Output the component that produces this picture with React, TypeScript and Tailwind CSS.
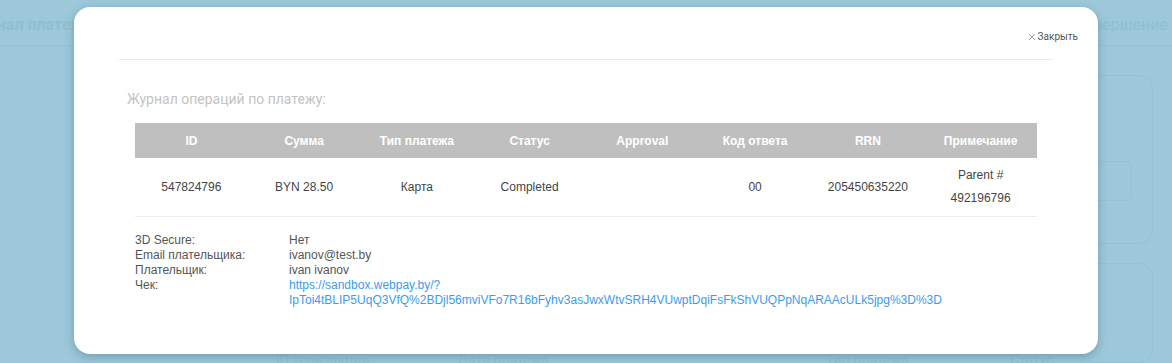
const columns = ["ID", "Сумма", "Тип платежа", "Статус", "Approval", "Код ответа", "RRN", "Примечание"];

const details = [
	{ label: "3D Secure:", value: "Нет" },
	{ label: "Email плательщика:", value: "ivanov@test.by" },
	{ label: "Плательщик:", value: "ivan ivanov" },
];

const receiptUrl =
	"https://sandbox.webpay.by/? IpToi4tBLIP5UqQ3VfQ%2BDjl56mviVFo7R16bFyhv3asJwxWtvSRH4VUwptDqiFsFkShVUQPpNqARAAcULk5jpg%3D%3D";

const Backdrop = () => {
	return (
		<div className="flex h-full flex-col text-[#91bfd2]" style={{ fontFamily: "Roboto, 'Liberation Sans', sans-serif" }}>
			<div className="flex h-[58px] items-center justify-between border-b border-[#94c2d4] pt-1">
				<span className="-ml-[36px] text-[16px] font-bold">Журнал платежей</span>
				<span className="mr-[4px] text-[16px]">завершение</span>
			</div>
			<div className="flex flex-1 justify-end pt-[29px] pr-[19px]">
				<div className="flex flex-col gap-[19px]">
					<div className="h-[169px] w-[74px] rounded-[14px] border border-[#94c2d4] pt-[85px]">
						<div className="h-[40px] w-[52px] rounded-[6px] border border-[#94c2d4]" />
					</div>
					<div className="h-[100px] w-[74px] rounded-[14px] border border-[#94c2d4]" />
				</div>
			</div>
		</div>
	);
};

const Modal = () => {
	return (
		<div className="absolute left-[74px] top-[7px] flex h-[347px] w-[1024px] flex-col rounded-[16px] bg-white shadow-[0_3px_10px_rgba(40,80,100,0.35)]">
			<div className="mx-[45px] flex h-[53px] items-start justify-end border-b border-[#ebebeb] pt-[24px]">
				<button
					className="-mr-[25px] flex items-center gap-[1px] text-[10px] leading-[12px] text-[#555]"
					style={{ fontFamily: "Roboto, 'Liberation Sans', sans-serif" }}
				>
					<svg width="8" height="8" viewBox="0 0 8 8" className="mr-[1px]">
						<path d="M1 1L7 7M7 1L1 7" stroke="#999" strokeWidth="0.9" fill="none" />
					</svg>
					<span>Закрыть</span>
				</button>
			</div>
			<div className="px-[53px]">
				<h3
					className="mt-[29px] text-[14px] leading-[20px] text-[#c4c4c4]"
					style={{ fontFamily: "Roboto, 'Liberation Sans', sans-serif" }}
				>
					Журнал операций по платежу:
				</h3>
			</div>
			<div className="mx-[61px] mt-[14px]" style={{ fontFamily: "'Liberation Sans', Arial, sans-serif" }}>
				<div className="grid h-[35px] grid-cols-8 items-center bg-[#bfbfbf] text-center text-[12px] font-bold text-white">
					{columns.map((c) => (
						<div key={c}>{c}</div>
					))}
				</div>
				<div className="grid h-[59px] grid-cols-8 items-center border-b border-[#ececec] text-center text-[12px] text-[#444]">
					<div>547824796</div>
					<div>BYN 28.50</div>
					<div>Карта</div>
					<div>Completed</div>
					<div></div>
					<div>00</div>
					<div>205450635220</div>
					<div className="leading-[23px]">
						Parent #
						<br />
						492196796
					</div>
				</div>
				<div className="mt-[16px] flex flex-col text-[12px] leading-[15px] text-[#555]">
					{details.map((d) => (
						<div key={d.label} className="flex">
							<span className="w-[154px] shrink-0">{d.label}</span>
							<span>{d.value}</span>
						</div>
					))}
					<div className="flex">
						<span className="w-[154px] shrink-0">Чек:</span>
						<a href="#" className="w-[700px] text-[#3b9cec]">
							{receiptUrl}
						</a>
					</div>
				</div>
			</div>
		</div>
	);
};

const App = () => {
	return (
		<div className="relative h-[363px] w-full overflow-hidden bg-[#9cc8da]">
			<Backdrop />
			<div className="absolute bottom-[-8px] left-0 flex w-full text-[14px] text-[#93c1d3]" style={{ fontFamily: "Roboto, 'Liberation Sans', sans-serif" }}>
				<span className="ml-[276px]">ID транзакции</span>
				<span className="ml-[88px]">Дата платежа</span>
				<span className="ml-[277px]">Тип платежа</span>
				<span className="ml-[101px]">Статус</span>
			</div>
			<Modal />
		</div>
	);
};

export default App;
